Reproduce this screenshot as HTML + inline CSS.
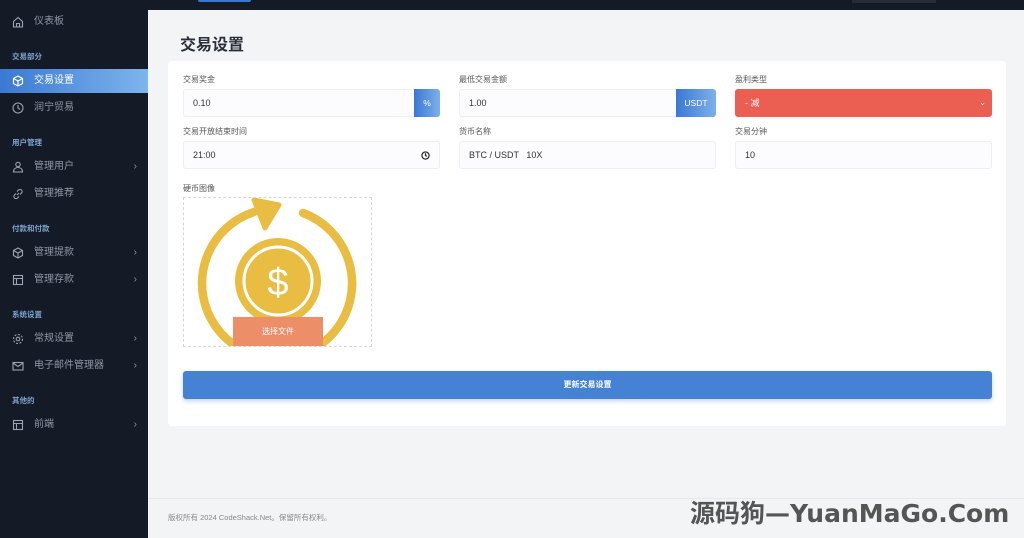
<!DOCTYPE html>
<html><head><meta charset="utf-8"><style>
*{margin:0;padding:0;box-sizing:border-box}
body{width:1024px;height:538px;overflow:hidden;background:#f3f4f6;font-family:"Liberation Sans","Noto Sans CJK SC",sans-serif;position:relative}
.sb{position:absolute;left:0;top:0;width:148px;height:538px;background:#151b26}
.it{position:absolute;left:0;width:148px;height:24px;color:#8e97a6;font-size:10px;line-height:24px;padding-left:34px}
.it svg{position:absolute;left:12px;top:6px}
.it .ch{position:absolute;right:11px;top:0;color:#8a93a3;font-size:10px}
.sec{position:absolute;left:12px;font-size:7.5px;color:#7fa3d0;font-weight:bold}
.act{background:linear-gradient(90deg,#3b78d2,#7db5ee);color:#fff}
.top{position:absolute;left:148px;top:0;width:876px;height:10px;background:#151b26}
.card{position:absolute;left:168px;top:61px;width:838px;height:365px;background:#fff;border-radius:3px}
.lb{position:absolute;font-size:8px;color:#555}
.in{position:absolute;height:28px;border:1px solid #eceef3;background:#fcfcfe;border-radius:3px;font-size:9px;color:#333;line-height:26px;padding-left:9px}
.ad{position:absolute;top:-1px;right:-1px;height:28px;background:linear-gradient(90deg,#3b78d2,#7db0ea);color:#fff;font-size:8.5px;line-height:28px;text-align:center;border-radius:0 3px 3px 0}
</style></head><body>
<div class="sb">
<div class="it" style="top:10px"><svg width="12" height="12" viewBox="0 0 12 12" fill="none" stroke="#9aa3b2" stroke-width="1.1"><path d="M1.5 5.5L6 1.5l4.5 4V11h-9z M4.5 11V7.5h3V11"/></svg>仪表板</div>
<div class="sec" style="top:51px">交易部分</div>
<div class="it act" style="top:69px"><svg width="12" height="12" viewBox="0 0 12 12" fill="none" stroke="#fff" stroke-width="1.2"><path d="M6 1l4.5 2.5v5L6 11 1.5 8.5v-5z M1.5 3.5L6 6l4.5-2.5 M6 6v5"/></svg>交易设置</div>
<div class="it" style="top:96px"><svg width="12" height="12" viewBox="0 0 12 12" fill="none" stroke="#9aa3b2" stroke-width="1.1"><circle cx="6" cy="6" r="5"/><path d="M6 3v3l2 1.5"/></svg>润宁贸易</div>
<div class="sec" style="top:137px">用户管理</div>
<div class="it" style="top:155px"><svg width="12" height="12" viewBox="0 0 12 12" fill="none" stroke="#9aa3b2" stroke-width="1.1"><circle cx="6" cy="3.5" r="2.2"/><path d="M1.5 11c0-3 2-4.5 4.5-4.5s4.5 1.5 4.5 4.5z"/></svg>管理用户<span class="ch">›</span></div>
<div class="it" style="top:182px"><svg width="12" height="12" viewBox="0 0 12 12" fill="none" stroke="#9aa3b2" stroke-width="1.1"><path d="M5 7l2-2 M4 5.5L2.5 7a2 2 0 003 3L7 8.5 M8 6.5L9.5 5a2 2 0 00-3-3L5 3.5"/></svg>管理推荐</div>
<div class="sec" style="top:223px">付款和付款</div>
<div class="it" style="top:241px"><svg width="12" height="12" viewBox="0 0 12 12" fill="none" stroke="#9aa3b2" stroke-width="1.1"><path d="M6 1l4.5 2.5v5L6 11 1.5 8.5v-5z M1.5 3.5L6 6l4.5-2.5 M6 6v5"/></svg>管理提款<span class="ch">›</span></div>
<div class="it" style="top:268px"><svg width="12" height="12" viewBox="0 0 12 12" fill="none" stroke="#9aa3b2" stroke-width="1.1"><rect x="1.5" y="1.5" width="9" height="9"/><path d="M1.5 4.5h9 M4.5 4.5v6"/></svg>管理存款<span class="ch">›</span></div>
<div class="sec" style="top:309px">系统设置</div>
<div class="it" style="top:327px"><svg width="12" height="12" viewBox="0 0 12 12" fill="none" stroke="#9aa3b2" stroke-width="1.1"><circle cx="6" cy="6" r="1.8"/><circle cx="6" cy="6" r="4.5" stroke-dasharray="2 1.5"/></svg>常规设置<span class="ch">›</span></div>
<div class="it" style="top:354px"><svg width="12" height="12" viewBox="0 0 12 12" fill="none" stroke="#9aa3b2" stroke-width="1.1"><rect x="1" y="2.5" width="10" height="7.5"/><path d="M1 3l5 3.5L11 3"/></svg>电子邮件管理器<span class="ch">›</span></div>
<div class="sec" style="top:395px">其他的</div>
<div class="it" style="top:413px"><svg width="12" height="12" viewBox="0 0 12 12" fill="none" stroke="#9aa3b2" stroke-width="1.1"><rect x="1.5" y="1.5" width="9" height="9"/><path d="M1.5 4.5h9 M4.5 4.5v6"/></svg>前端<span class="ch">›</span></div>
</div>
<div class="top"><div style="position:absolute;left:50px;top:0;width:53px;height:2px;background:#3b78d2;border-radius:0 0 2px 2px"></div><div style="position:absolute;left:704px;top:0;width:84px;height:3px;background:#262c38"></div></div>
<div style="position:absolute;left:180px;top:31px;font-size:16px;font-weight:bold;color:#2b2f3a">交易设置</div>
<div class="card"></div>
<div class="lb" style="left:183px;top:74px">交易奖金</div>
<div class="lb" style="left:459px;top:74px">最低交易金额</div>
<div class="lb" style="left:735px;top:74px">盈利类型</div>
<div class="in" style="left:183px;top:89px;width:257px">0.10<div class="ad" style="width:26px">%</div></div>
<div class="in" style="left:459px;top:89px;width:257px">1.00<div class="ad" style="width:40px">USDT</div></div>
<div class="in" style="left:735px;top:89px;width:257px;background:#eb5f52;border-color:#eb5f52;color:#fff">- 减<span style="position:absolute;right:5px;font-size:8px">⌄</span></div>
<div class="lb" style="left:183px;top:126px">交易开放结束时间</div>
<div class="lb" style="left:459px;top:126px">货币名称</div>
<div class="lb" style="left:735px;top:126px">交易分钟</div>
<div class="in" style="left:183px;top:141px;width:257px">21:00<svg style="position:absolute;right:9px;top:9px" width="9" height="9" viewBox="0 0 10 10" fill="none" stroke="#222" stroke-width="1.3"><circle cx="5" cy="5" r="4"/><path d="M5 2.5V5l1.5 1"/></svg></div>
<div class="in" style="left:459px;top:141px;width:257px">BTC / USDT &nbsp; 10X</div>
<div class="in" style="left:735px;top:141px;width:257px">10</div>
<div class="lb" style="left:183px;top:183px">硬币图像</div>
<div style="position:absolute;left:183px;top:197px;width:189px;height:150px;border:1px dashed #d6d6d6;overflow:hidden">
<svg width="189" height="150" viewBox="0 0 189 150">
<path d="M70 14 A75 75 0 1 0 119 15" fill="none" stroke="#e8bd42" stroke-width="8.5" stroke-linecap="round"/>
<path d="M70 2 L95 7 L81 30 Z" fill="#e8bd42" stroke="#e8bd42" stroke-width="5" stroke-linejoin="round"/>
<circle cx="94" cy="83" r="43" fill="#e8bd42"/>
<circle cx="94" cy="83" r="34" fill="none" stroke="#fff" stroke-width="3"/>
<text x="94" y="97" text-anchor="middle" font-size="38" fill="#fff" font-family="Liberation Sans">$</text>
</svg>
<div style="position:absolute;left:49px;top:119px;width:90px;height:31px;background:#ec8f68;color:#fff;font-size:8px;text-align:center;line-height:29px">选择文件</div>
</div>
<div style="position:absolute;left:183px;top:371px;width:809px;height:28px;background:#4582d4;border-radius:3px;box-shadow:0 2px 4px rgba(69,130,212,.35);color:#fff;font-size:8px;font-weight:bold;text-align:center;line-height:28px">更新交易设置</div>
<div style="position:absolute;left:148px;top:498px;width:876px;height:1px;background:#e6e8ec"></div>
<div style="position:absolute;left:168px;top:512px;font-size:7.5px;color:#888">版权所有 2024 CodeShack.Net。保留所有权利。</div>
<div style="position:absolute;left:690px;top:494px;font-size:25px;font-weight:bold;color:#555;font-family:'DejaVu Sans','Noto Sans CJK SC',sans-serif;letter-spacing:0">源码狗—YuanMaGo.Com</div>
</body></html>
